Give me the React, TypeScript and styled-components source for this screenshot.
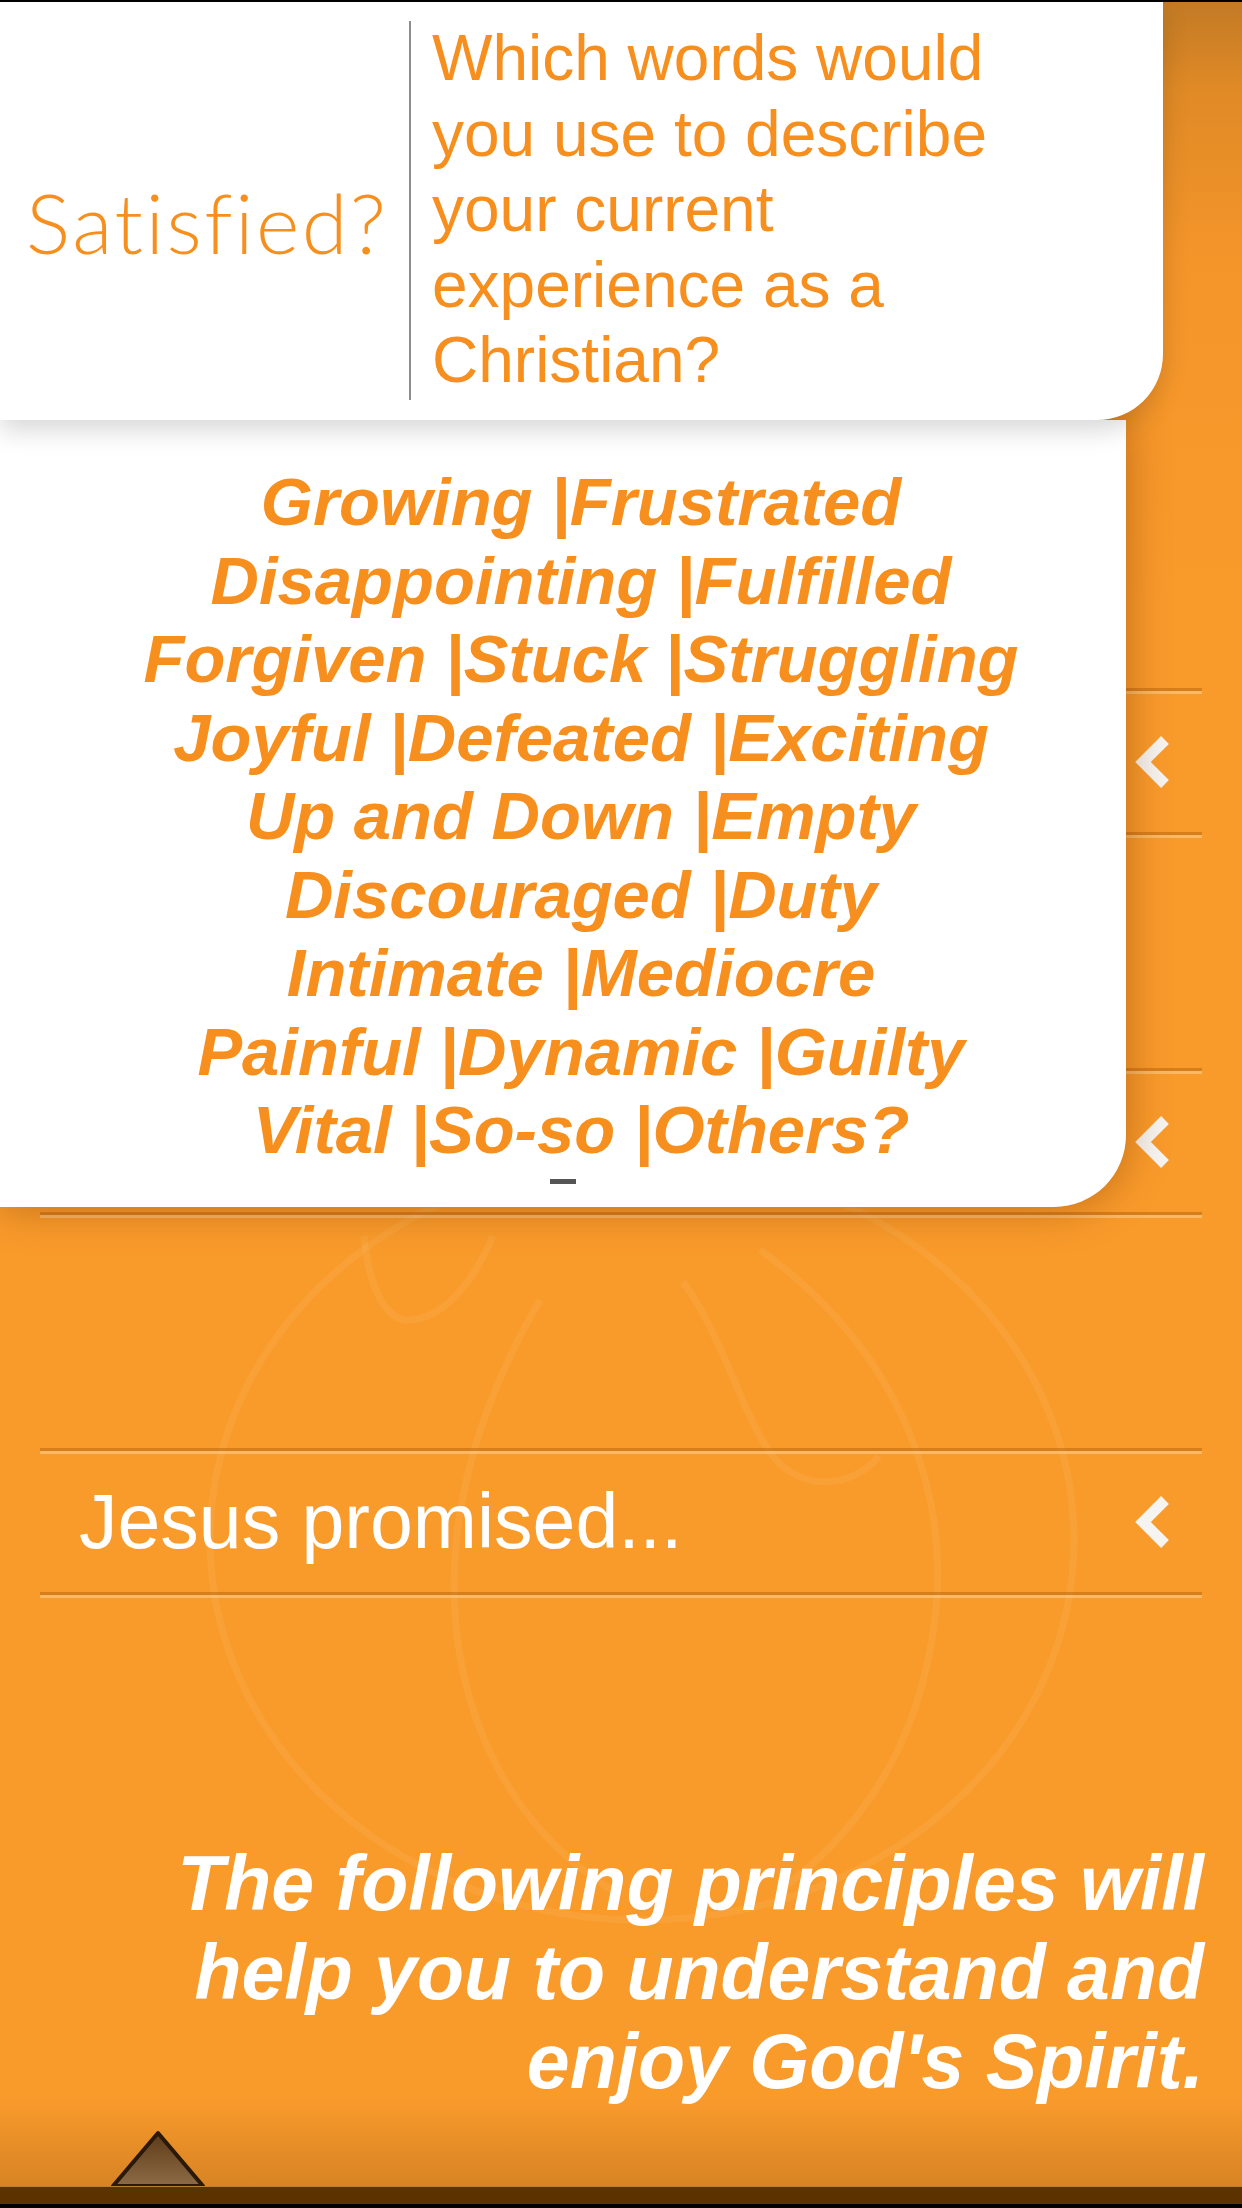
import React from "react";
import styled, { createGlobalStyle } from "styled-components";

const GlobalStyle = createGlobalStyle`
  html, body {
    margin: 0;
    padding: 0;
    background: #000;
  }
  * {
    box-sizing: border-box;
  }
`;

const orange = "#f78f1e";

const SScreen = styled.div`
  position: relative;
  width: 1242px;
  height: 2208px;
  overflow: hidden;
  font-family: "Liberation Sans", Arial, sans-serif;
  background: linear-gradient(
    to bottom,
    #c27a25 0px,
    #e08a26 90px,
    #f4952a 260px,
    #f99b2b 600px,
    #f99b2b 2095px,
    #e28d29 2185px
  );
  display: flex;
  flex-direction: column;
`;

const STopBar = styled.div`
  height: 2px;
  background: #000;
  position: relative;
  z-index: 4;
`;

const SWatermark = styled.svg`
  position: absolute;
  left: 0;
  top: 0;
  z-index: 0;
  pointer-events: none;
`;

const SList = styled.div`
  position: relative;
  z-index: 1;
  display: flex;
  flex-direction: column;
  gap: 233px;
  padding-top: 686px;
`;

const SRow = styled.div`
  height: 147px;
  margin: 0 40px;
  border-top: 3px solid rgba(170, 86, 6, 0.42);
  border-bottom: 3px solid rgba(170, 86, 6, 0.42);
  box-shadow: inset 0 3px 0 rgba(255, 214, 156, 0.5),
    0 3px 0 rgba(255, 214, 156, 0.5);
  display: flex;
  align-items: center;
  justify-content: space-between;
  padding: 0 27px 0 39px;
`;

const SRowLabel = styled.span`
  color: #fff;
  font-size: 77px;
  line-height: 1.1;
`;

const SChevron = styled.svg`
  flex-shrink: 0;
  margin-left: auto;
`;

const SClosing = styled.p`
  position: relative;
  z-index: 1;
  margin: 244px 0 0;
  padding-right: 38px;
  text-align: right;
  color: #fff;
  font-size: 77px;
  line-height: 89px;
  font-weight: 700;
  font-style: italic;
`;

const SFooter = styled.div`
  position: relative;
  z-index: 1;
  margin-top: auto;
  display: flex;
  flex-direction: column;
`;

const SHandleArea = styled.div`
  height: 79px;
  display: flex;
  align-items: flex-end;
  padding-left: 110px;
  background: linear-gradient(
    to bottom,
    rgba(200, 110, 20, 0) 0%,
    rgba(190, 105, 20, 0.25) 100%
  );
`;

const SBar = styled.div`
  height: 17px;
  background: #5c3300;
  border-top: 1px solid #b7822f;
  border-bottom: 4px solid #000;
  box-sizing: content-box;
`;

const SHeaderCard = styled.div`
  position: absolute;
  top: 2px;
  left: 0;
  z-index: 3;
  width: 1163px;
  height: 418px;
  background: #fff;
  border-bottom-right-radius: 66px;
  box-shadow: 0 10px 26px rgba(0, 0, 0, 0.16);
  display: flex;
  align-items: flex-start;
  padding-top: 19px;
`;

const SHeaderTitle = styled.div`
  width: 409px;
  flex-shrink: 0;
  margin-top: 160px;
  padding-left: 26px;
  font-family: Lato, "Open Sans", sans-serif;
  font-weight: 300;
  font-size: 83px;
  line-height: 82px;
  letter-spacing: 2.5px;
  color: ${orange};
  white-space: nowrap;
`;

const SQuestion = styled.div`
  height: 379px;
  border-left: 2px solid #8d8d8d;
  padding: 0 0 0 21px;
  font-size: 64px;
  line-height: 75.5px;
  color: ${orange};
`;

const SWordsCard = styled.div`
  position: absolute;
  top: 420px;
  left: 0;
  z-index: 2;
  width: 1126px;
  height: 787px;
  background: #fff;
  border-bottom-right-radius: 72px;
  box-shadow: 0 0 44px rgba(120, 50, 0, 0.45);
  display: flex;
  flex-direction: column;
  align-items: center;
  padding-top: 43px;
`;

const SWords = styled.div`
  width: 100%;
  padding-left: 36px;
  text-align: center;
  color: ${orange};
  font-size: 67px;
  line-height: 78.5px;
  font-weight: 700;
  font-style: italic;
  white-space: nowrap;
`;

const SScrollMark = styled.div`
  width: 26px;
  height: 5px;
  margin-top: 9px;
  background: #555;
`;

const words = [
  "Growing |Frustrated",
  "Disappointing |Fulfilled",
  "Forgiven |Stuck |Struggling",
  "Joyful |Defeated |Exciting",
  "Up and Down |Empty",
  "Discouraged |Duty",
  "Intimate |Mediocre",
  "Painful |Dynamic |Guilty",
  "Vital |So-so |Others?",
];

function Chevron() {
  return (
    <SChevron width="44" height="56" viewBox="0 0 44 56">
      <polyline
        points="34,6 12,28 34,50"
        fill="none"
        stroke="#f6f4f1"
        strokeWidth="11"
        strokeLinejoin="miter"
      />
    </SChevron>
  );
}

function Watermark() {
  return (
    <SWatermark width="1242" height="2208" viewBox="0 0 1242 2208">
      <g fill="none" stroke="rgba(255,235,200,0.075)" strokeWidth="7">
        <ellipse cx="642" cy="1540" rx="432" ry="380" />
        <path d="M364 1236 C370 1300 392 1322 410 1320 C440 1318 470 1290 493 1236" />
        <path d="M683 1282 C720 1330 745 1420 770 1452 C795 1490 850 1492 879 1456" />
        <path d="M540 1300 C470 1420 430 1560 470 1700 C500 1800 560 1860 620 1895" />
        <path d="M760 1250 C900 1350 960 1500 930 1650 C910 1760 850 1840 780 1890" />
      </g>
    </SWatermark>
  );
}

export default function App() {
  return (
    <>
      <GlobalStyle />
      <SScreen>
        <Watermark />
        <STopBar />
        <SList>
          <SRow>
            <Chevron />
          </SRow>
          <SRow>
            <Chevron />
          </SRow>
          <SRow>
            <SRowLabel>Jesus promised...</SRowLabel>
            <Chevron />
          </SRow>
        </SList>
        <SClosing>
          The following principles will
          <br />
          help you to understand and
          <br />
          enjoy God's Spirit.
        </SClosing>
        <SFooter>
          <SHandleArea>
            <svg width="96" height="56" viewBox="0 0 96 56">
              <defs>
                <linearGradient id="handleFill" x1="0" y1="0" x2="0" y2="1">
                  <stop offset="0" stopColor="#5e3b18" />
                  <stop offset="1" stopColor="#8d6b46" />
                </linearGradient>
              </defs>
              <polygon
                points="3,56 48,3 93,56"
                fill="url(#handleFill)"
                stroke="#2b1a0a"
                strokeWidth="4"
                strokeLinejoin="round"
              />
            </svg>
          </SHandleArea>
          <SBar />
        </SFooter>

        <SWordsCard>
          <SWords>
            {words.map((line) => (
              <div key={line}>{line}</div>
            ))}
          </SWords>
          <SScrollMark />
        </SWordsCard>

        <SHeaderCard>
          <SHeaderTitle>Satisfied?</SHeaderTitle>
          <SQuestion>
            Which words would
            <br />
            you use to describe
            <br />
            your current
            <br />
            experience as a
            <br />
            Christian?
          </SQuestion>
        </SHeaderCard>
      </SScreen>
    </>
  );
}
